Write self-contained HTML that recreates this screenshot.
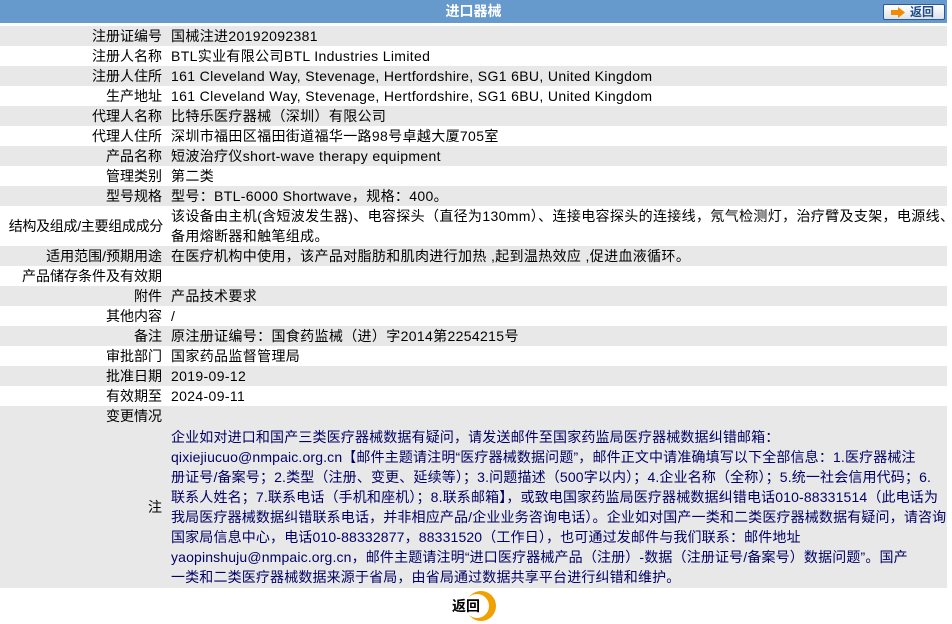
<!DOCTYPE html>
<html><head><meta charset="utf-8"><style>
body{margin:0;background:#fff;font-family:"Liberation Sans","Noto Sans CJK SC",sans-serif;font-size:14px;color:#000;}
.wrap{position:relative;width:952px;height:624px;overflow:hidden}
.hdr{position:absolute;left:0;top:0;width:947px;height:23px;background:#6699CC;color:#fff;font-weight:bold;text-align:center;line-height:23px;font-size:14px}
.btn{position:absolute;left:883px;top:4px;width:62px;height:16px;border:1px solid #2a5a9a;border-radius:2px;background:linear-gradient(#fff,#dde3ea);box-sizing:border-box;font-size:12px;font-weight:bold;color:#1a4a8a;line-height:14px}
table{position:absolute;left:0;top:26px;width:947px;border-collapse:collapse;table-layout:fixed}
td{padding:0;height:20px;line-height:20px;vertical-align:middle;overflow:visible}
td.l{text-align:right;padding-right:9px;white-space:nowrap}
td.v{padding-left:0;letter-spacing:0.35px}
tr.g td{background:#E8E8E8}
.note{color:#000066;line-height:20px;padding:1px 0;white-space:nowrap;letter-spacing:0.15px}
</style></head><body><div class="wrap">
<div class="hdr">进口器械</div>
<div class="btn"><svg style="position:absolute;left:7px;top:2px" width="16" height="11"><rect x="0" y="3" width="8" height="5" fill="#f08c00"/><polygon points="7,0 14,5.5 7,11" fill="#f08c00"/></svg><span style="position:absolute;left:26px;top:0">返回</span></div>
<table>
<colgroup><col style="width:171px"><col style="width:776px"></colgroup>
<tr class="g"><td class="l">注册证编号</td><td class="v">国械注进20192092381</td></tr>
<tr><td class="l">注册人名称</td><td class="v">BTL实业有限公司BTL Industries Limited</td></tr>
<tr class="g"><td class="l">注册人住所</td><td class="v">161 Cleveland Way, Stevenage, Hertfordshire, SG1 6BU, United Kingdom</td></tr>
<tr><td class="l">生产地址</td><td class="v">161 Cleveland Way, Stevenage, Hertfordshire, SG1 6BU, United Kingdom</td></tr>
<tr class="g"><td class="l">代理人名称</td><td class="v">比特乐医疗器械（深圳）有限公司</td></tr>
<tr><td class="l">代理人住所</td><td class="v">深圳市福田区福田街道福华一路98号卓越大厦705室</td></tr>
<tr class="g"><td class="l">产品名称</td><td class="v">短波治疗仪short-wave therapy equipment</td></tr>
<tr><td class="l">管理类别</td><td class="v">第二类</td></tr>
<tr class="g"><td class="l">型号规格</td><td class="v">型号：BTL-6000 Shortwave，规格：400。</td></tr>
<tr><td class="l" style="height:40px;padding-right:8px;letter-spacing:-0.3px">结构及组成/主要组成成分</td><td class="v" style="white-space:nowrap">该设备由主机(含短波发生器)、电容探头（直径为130mm）、连接电容探头的连接线，氖气检测灯，治疗臂及支架，电源线、<br>备用熔断器和触笔组成。</td></tr>
<tr class="g"><td class="l">适用范围/预期用途</td><td class="v">在医疗机构中使用，该产品对脂肪和肌肉进行加热 ,起到温热效应 ,促进血液循环。</td></tr>
<tr><td class="l">产品储存条件及有效期</td><td class="v"></td></tr>
<tr class="g"><td class="l">附件</td><td class="v">产品技术要求</td></tr>
<tr><td class="l">其他内容</td><td class="v">/</td></tr>
<tr class="g"><td class="l">备注</td><td class="v">原注册证编号：国食药监械（进）字2014第2254215号</td></tr>
<tr><td class="l">审批部门</td><td class="v">国家药品监督管理局</td></tr>
<tr class="g"><td class="l">批准日期</td><td class="v">2019-09-12</td></tr>
<tr><td class="l">有效期至</td><td class="v">2024-09-11</td></tr>
<tr class="g"><td class="l">变更情况</td><td class="v"></td></tr>
<tr class="g"><td class="l" style="height:160px">注</td><td class="v" style="letter-spacing:0"><div class="note">企业如对进口和国产三类医疗器械数据有疑问，请发送邮件至国家药监局医疗器械数据纠错邮箱：<br>qixiejiucuo@nmpaic.org.cn【邮件主题请注明“医疗器械数据问题”，邮件正文中请准确填写以下全部信息：1.医疗器械注<br>册证号/备案号；2.类型（注册、变更、延续等）；3.问题描述（500字以内）；4.企业名称（全称）；5.统一社会信用代码；6.<br>联系人姓名；7.联系电话（手机和座机）；8.联系邮箱】，或致电国家药监局医疗器械数据纠错电话010-88331514（此电话为<br>我局医疗器械数据纠错联系电话，并非相应产品/企业业务咨询电话）。企业如对国产一类和二类医疗器械数据有疑问，请咨询<br>国家局信息中心，电话010-88332877，88331520（工作日），也可通过发邮件与我们联系：邮件地址<br>yaopinshuju@nmpaic.org.cn，邮件主题请注明“进口医疗器械产品（注册）-数据（注册证号/备案号）数据问题”。国产<br>一类和二类医疗器械数据来源于省局，由省局通过数据共享平台进行纠错和维护。</div></td></tr>
</table>
<div style="position:absolute;left:452px;top:590px;width:46px;height:32px">
<svg width="46" height="32" style="position:absolute;left:0;top:0"><circle cx="29" cy="16" r="15" fill="#f0a000"/><circle cx="25" cy="16" r="12" fill="#fff"/></svg>
<span style="position:absolute;left:0;top:6px;font-weight:bold;font-size:14px">返回</span></div>
</div></body></html>
